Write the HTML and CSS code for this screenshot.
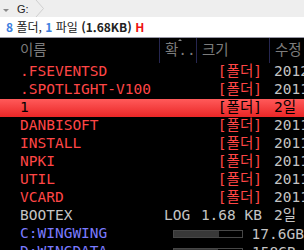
FILE: index.html
```html
<!DOCTYPE html>
<html lang="ko">
<head>
    <meta charset="UTF-8">
    <title>G:</title>
    <link rel="stylesheet" href="styles.css">
</head>
<body>
    <div class="crumbbar">
        <span class="drop"></span>
        <span class="crumb">G:</span>
        <svg class="chev" width="10" height="17" viewBox="0 0 10 17"><path d="M1 0 L8.5 8.5 L1 17" fill="none" stroke="#cfcfcf" stroke-width="1"/></svg>
    </div>
    <div class="status">
        <b class="num">8</b> 폴더, <b class="num">1</b> 파일 <b>(1.68KB)</b> <b class="hid">H</b>
    </div>
    <div class="list">
        <div class="row head">
            <span class="c name">이름</span>
            <span class="c ext">확..<i class="sort"></i></span>
            <span class="c size">크기</span>
            <span class="c date">수정</span>
        </div>
        <div class="row dir">
            <span class="c name">.FSEVENTSD</span><span class="c ext"></span>
            <span class="c size">[폴더]</span><span class="c date">2012-09-14 오후 2:31</span>
        </div>
        <div class="row dir">
            <span class="c name">.SPOTLIGHT-V100</span><span class="c ext"></span>
            <span class="c size">[폴더]</span><span class="c date">2011-12-02 오전 9:05</span>
        </div>
        <div class="row dir sel">
            <span class="c name">1</span><span class="c ext"></span>
            <span class="c size">[폴더]</span><span class="c date">2일 전</span>
        </div>
        <div class="row dir">
            <span class="c name">DANBISOFT</span><span class="c ext"></span>
            <span class="c size">[폴더]</span><span class="c date">2011-11-20 오후 4:12</span>
        </div>
        <div class="row dir">
            <span class="c name">INSTALL</span><span class="c ext"></span>
            <span class="c size">[폴더]</span><span class="c date">2011-11-20 오후 4:13</span>
        </div>
        <div class="row dir">
            <span class="c name">NPKI</span><span class="c ext"></span>
            <span class="c size">[폴더]</span><span class="c date">2011-11-21 오전 10:40</span>
        </div>
        <div class="row dir">
            <span class="c name">UTIL</span><span class="c ext"></span>
            <span class="c size">[폴더]</span><span class="c date">2011-11-21 오전 11:02</span>
        </div>
        <div class="row dir">
            <span class="c name">VCARD</span><span class="c ext"></span>
            <span class="c size">[폴더]</span><span class="c date">2011-11-23 오후 7:48</span>
        </div>
        <div class="row file">
            <span class="c name">BOOTEX</span><span class="c ext">LOG</span>
            <span class="c size">1.68 KB</span><span class="c date">2일 전</span>
        </div>
        <div class="row drive">
            <span class="c name">C:WINGWING</span>
            <span class="c usage"><span class="bar"><span class="fill" style="width: 67%"></span></span><span class="free">17.6GB</span></span>
        </div>
        <div class="row drive">
            <span class="c name">D:WINGDATA</span>
            <span class="c usage"><span class="bar"><span class="fill" style="width: 64%"></span></span><span class="free">158GB</span></span>
        </div>
    </div>
</body>
</html>
```

FILE: styles.css
```css
body {
    margin: 0;
    width: 304px;
    height: 250px;
    overflow: hidden;
    background-color: #000;
    font-family: "Noto Sans CJK KR", sans-serif;
}

/* breadcrumb strip */
.crumbbar {
    height: 17px;
    background-color: #eeeeee;
    display: flex;
    align-items: center;
}

.drop {
    width: 0;
    height: 0;
    margin-left: 3px;
    margin-top: 3px;
    border-left: 3px solid transparent;
    border-right: 3px solid transparent;
    border-top: 3px solid #8a8a8a;
}

.crumb {
    margin-left: 8px;
    font-family: "Liberation Sans", sans-serif;
    font-size: 11px;
    color: #222;
}

.chev {
    margin-left: 6px;
}

/* folder summary */
.status {
    height: 20px;
    line-height: 20px;
    background-color: #fff;
    padding-left: 6px;
    font-size: 12px;
    color: #222;
    white-space: nowrap;
}

.status b {
    font-weight: 700;
}

.status .num {
    color: #3d7fe0; /* blue counters */
}

.status .hid {
    color: #ee1111;
}

/* file list */
.list {
    border-top: 1px solid #9898a6;
    font-family: "DejaVu Sans Mono", "Noto Sans CJK KR", monospace;
    font-size: 14.5px;
}

.row {
    display: grid;
    grid-template-columns: 159px 37px 73px 35px;
    height: 18px;
    line-height: 17px;
    white-space: nowrap;
}

.c {
    overflow: hidden;
    min-width: 0;
}

.name {
    padding-left: 20px;
}

.ext {
    padding-left: 5px;
    position: relative;
    overflow: visible;
}

.size {
    text-align: right;
    padding-right: 7px;
}

.date {
    padding-left: 5px;
    color: #c4c4c4;
}

.head {
    height: 25px;
    line-height: 24px;
    color: #7c7c7c;
}

.head .ext,
.head .size,
.head .date {
    border-left: 1px solid #262650;
    color: #7c7c7c;
}

.head .size {
    text-align: left;
    padding-left: 5px;
}

.sort {
    position: absolute;
    left: 18px;
    top: 1px;
    width: 0;
    height: 0;
    border-left: 2px solid transparent;
    border-right: 2px solid transparent;
    border-bottom: 2px solid #8a8a8a;
}

.dir .name,
.dir .size {
    color: #ff4646;
}

.sel {
    background: linear-gradient(#ff5a5a, #ea2626);
}

.sel .name,
.sel .size,
.sel .date {
    color: #000;
}

.file {
    color: #c4c4c4;
}

.drive .name {
    color: #7a7aff;
}

.usage {
    grid-column: 2 / 5;
    display: flex;
    align-items: center;
    overflow: visible;
}

.bar {
    width: 68px;
    height: 6px;
    margin-left: 14px;
    border: 1px solid #474747;
    background-color: #000;
}

.fill {
    display: block;
    height: 100%;
    background-color: #383838;
}

.free {
    margin-left: 9px;
    color: #c4c4c4;
}
```
